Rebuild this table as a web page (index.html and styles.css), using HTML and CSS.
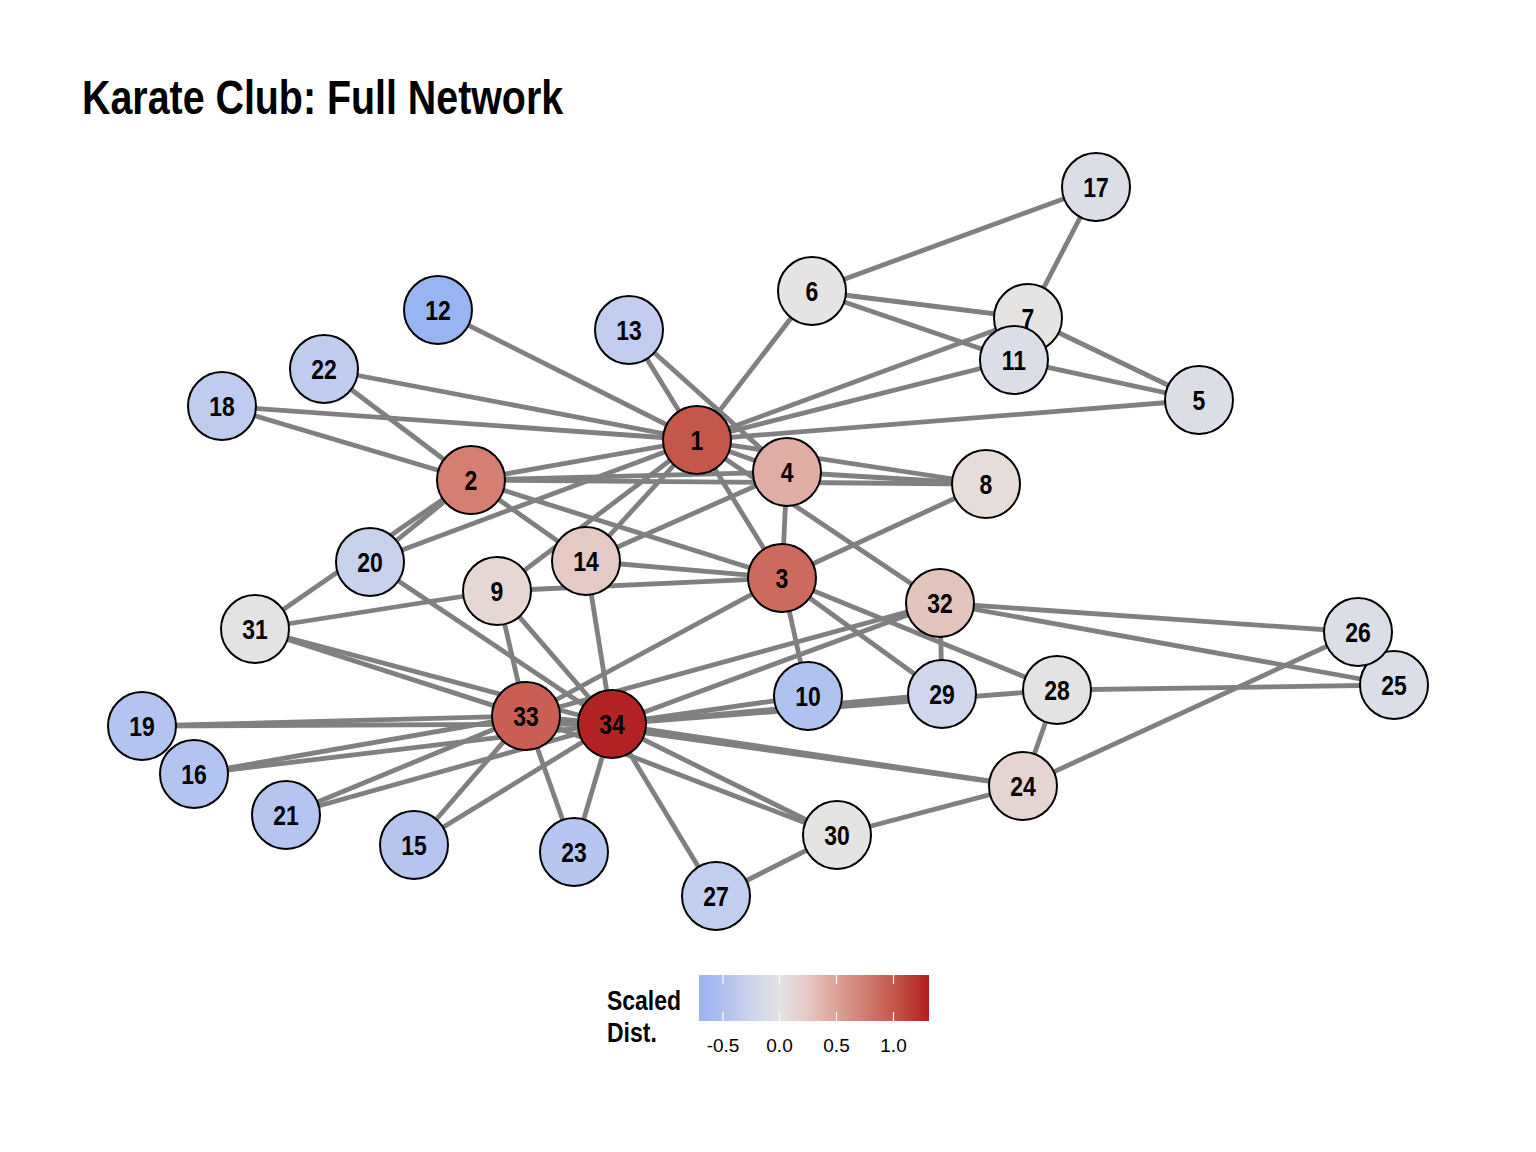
FILE: index.html
```html
<!DOCTYPE html>
<html lang="en">
<head>
<meta charset="utf-8">
<title>Karate Club: Full Network</title>
<link rel="stylesheet" href="styles.css">
</head>
<body>
<div class="page">
  <h1 class="title">Karate Club: Full Network</h1>
  <svg class="network" width="1536" height="800" viewBox="0 140 1536 800" xmlns="http://www.w3.org/2000/svg">
    <g class="edges">
      <line x1="697" y1="440" x2="471" y2="480"/>
      <line x1="697" y1="440" x2="782" y2="578"/>
      <line x1="697" y1="440" x2="787" y2="472"/>
      <line x1="697" y1="440" x2="1199" y2="400"/>
      <line x1="697" y1="440" x2="812" y2="291"/>
      <line x1="697" y1="440" x2="1028" y2="318"/>
      <line x1="697" y1="440" x2="986" y2="484"/>
      <line x1="697" y1="440" x2="497" y2="591"/>
      <line x1="697" y1="440" x2="1014" y2="360"/>
      <line x1="697" y1="440" x2="438" y2="310"/>
      <line x1="697" y1="440" x2="629" y2="330"/>
      <line x1="697" y1="440" x2="586" y2="561"/>
      <line x1="697" y1="440" x2="222" y2="406"/>
      <line x1="697" y1="440" x2="370" y2="562"/>
      <line x1="697" y1="440" x2="324" y2="369"/>
      <line x1="697" y1="440" x2="940" y2="603"/>
      <line x1="471" y1="480" x2="782" y2="578"/>
      <line x1="471" y1="480" x2="787" y2="472"/>
      <line x1="471" y1="480" x2="986" y2="484"/>
      <line x1="471" y1="480" x2="586" y2="561"/>
      <line x1="471" y1="480" x2="222" y2="406"/>
      <line x1="471" y1="480" x2="370" y2="562"/>
      <line x1="471" y1="480" x2="324" y2="369"/>
      <line x1="471" y1="480" x2="255" y2="629"/>
      <line x1="782" y1="578" x2="787" y2="472"/>
      <line x1="782" y1="578" x2="986" y2="484"/>
      <line x1="782" y1="578" x2="497" y2="591"/>
      <line x1="782" y1="578" x2="808" y2="696"/>
      <line x1="782" y1="578" x2="586" y2="561"/>
      <line x1="782" y1="578" x2="1057" y2="690"/>
      <line x1="782" y1="578" x2="942" y2="694"/>
      <line x1="782" y1="578" x2="526" y2="716"/>
      <line x1="787" y1="472" x2="986" y2="484"/>
      <line x1="787" y1="472" x2="629" y2="330"/>
      <line x1="787" y1="472" x2="586" y2="561"/>
      <line x1="1199" y1="400" x2="1028" y2="318"/>
      <line x1="1199" y1="400" x2="1014" y2="360"/>
      <line x1="812" y1="291" x2="1028" y2="318"/>
      <line x1="812" y1="291" x2="1014" y2="360"/>
      <line x1="812" y1="291" x2="1096" y2="187"/>
      <line x1="1028" y1="318" x2="1096" y2="187"/>
      <line x1="497" y1="591" x2="255" y2="629"/>
      <line x1="497" y1="591" x2="526" y2="716"/>
      <line x1="497" y1="591" x2="612" y2="724"/>
      <line x1="808" y1="696" x2="612" y2="724"/>
      <line x1="586" y1="561" x2="612" y2="724"/>
      <line x1="414" y1="845" x2="526" y2="716"/>
      <line x1="414" y1="845" x2="612" y2="724"/>
      <line x1="194" y1="774" x2="526" y2="716"/>
      <line x1="194" y1="774" x2="612" y2="724"/>
      <line x1="142" y1="726" x2="526" y2="716"/>
      <line x1="142" y1="726" x2="612" y2="724"/>
      <line x1="370" y1="562" x2="612" y2="724"/>
      <line x1="286" y1="815" x2="526" y2="716"/>
      <line x1="286" y1="815" x2="612" y2="724"/>
      <line x1="574" y1="852" x2="526" y2="716"/>
      <line x1="574" y1="852" x2="612" y2="724"/>
      <line x1="1023" y1="786" x2="1358" y2="632"/>
      <line x1="1023" y1="786" x2="1057" y2="690"/>
      <line x1="1023" y1="786" x2="837" y2="835"/>
      <line x1="1023" y1="786" x2="526" y2="716"/>
      <line x1="1023" y1="786" x2="612" y2="724"/>
      <line x1="1394" y1="685" x2="1358" y2="632"/>
      <line x1="1394" y1="685" x2="1057" y2="690"/>
      <line x1="1394" y1="685" x2="940" y2="603"/>
      <line x1="1358" y1="632" x2="940" y2="603"/>
      <line x1="716" y1="896" x2="837" y2="835"/>
      <line x1="716" y1="896" x2="612" y2="724"/>
      <line x1="1057" y1="690" x2="612" y2="724"/>
      <line x1="942" y1="694" x2="940" y2="603"/>
      <line x1="942" y1="694" x2="612" y2="724"/>
      <line x1="837" y1="835" x2="526" y2="716"/>
      <line x1="837" y1="835" x2="612" y2="724"/>
      <line x1="255" y1="629" x2="526" y2="716"/>
      <line x1="255" y1="629" x2="612" y2="724"/>
      <line x1="940" y1="603" x2="526" y2="716"/>
      <line x1="940" y1="603" x2="612" y2="724"/>
      <line x1="526" y1="716" x2="612" y2="724"/>
    </g>
    <g class="nodes">
      <circle cx="697" cy="440" r="34" fill="#c5564a"/><text x="697" y="450">1</text>
      <circle cx="471" cy="480" r="34" fill="#d57f71"/><text x="471" y="490">2</text>
      <circle cx="782" cy="578" r="34" fill="#cd6a5e"/><text x="782" y="588">3</text>
      <circle cx="787" cy="472" r="34" fill="#e0ada5"/><text x="787" y="482">4</text>
      <circle cx="1199" cy="400" r="34" fill="#dcdee6"/><text x="1199" y="410">5</text>
      <circle cx="812" cy="291" r="34" fill="#e5e4e3"/><text x="812" y="301">6</text>
      <circle cx="1028" cy="318" r="34" fill="#e5e4e3"/><text x="1028" y="328">7</text>
      <circle cx="986" cy="484" r="34" fill="#e6dcd9"/><text x="986" y="494">8</text>
      <circle cx="497" cy="591" r="34" fill="#e6d7d4"/><text x="497" y="601">9</text>
      <circle cx="808" cy="696" r="34" fill="#b0c2f0"/><text x="808" y="706">10</text>
      <circle cx="1014" cy="360" r="34" fill="#dcdee7"/><text x="1014" y="370">11</text>
      <circle cx="438" cy="310" r="34" fill="#98b5f3"/><text x="438" y="320">12</text>
      <circle cx="629" cy="330" r="34" fill="#c2cdef"/><text x="629" y="340">13</text>
      <circle cx="586" cy="561" r="34" fill="#e4c9c4"/><text x="586" y="571">14</text>
      <circle cx="414" cy="845" r="34" fill="#b5c5f0"/><text x="414" y="855">15</text>
      <circle cx="194" cy="774" r="34" fill="#b3c4f0"/><text x="194" y="784">16</text>
      <circle cx="1096" cy="187" r="34" fill="#dcdee6"/><text x="1096" y="197">17</text>
      <circle cx="222" cy="406" r="34" fill="#c0ccef"/><text x="222" y="416">18</text>
      <circle cx="142" cy="726" r="34" fill="#b4c4f0"/><text x="142" y="736">19</text>
      <circle cx="370" cy="562" r="34" fill="#c9d2ec"/><text x="370" y="572">20</text>
      <circle cx="286" cy="815" r="34" fill="#b5c5f0"/><text x="286" y="825">21</text>
      <circle cx="324" cy="369" r="34" fill="#c0ccef"/><text x="324" y="379">22</text>
      <circle cx="574" cy="852" r="34" fill="#b7c6f0"/><text x="574" y="862">23</text>
      <circle cx="1023" cy="786" r="34" fill="#e5d4d1"/><text x="1023" y="796">24</text>
      <circle cx="1394" cy="685" r="34" fill="#dcdee7"/><text x="1394" y="695">25</text>
      <circle cx="1358" cy="632" r="34" fill="#dcdee7"/><text x="1358" y="642">26</text>
      <circle cx="716" cy="896" r="34" fill="#c2ceef"/><text x="716" y="906">27</text>
      <circle cx="1057" cy="690" r="34" fill="#e3e3e3"/><text x="1057" y="700">28</text>
      <circle cx="942" cy="694" r="34" fill="#d0d6ec"/><text x="942" y="704">29</text>
      <circle cx="837" cy="835" r="34" fill="#e4e4e3"/><text x="837" y="845">30</text>
      <circle cx="255" cy="629" r="34" fill="#e3e3e3"/><text x="255" y="639">31</text>
      <circle cx="940" cy="603" r="34" fill="#e3c4bd"/><text x="940" y="613">32</text>
      <circle cx="526" cy="716" r="34" fill="#cb5e52"/><text x="526" y="726">33</text>
      <circle cx="612" cy="724" r="34" fill="#b42323"/><text x="612" y="734">34</text>
    </g>
  </svg>
  <div class="legend">
    <div class="legend-title"><span class="narrow">Scaled</span><br><span class="narrow">Dist.</span></div>
    <svg class="colorbar" width="240" height="85" viewBox="0 0 240 85" xmlns="http://www.w3.org/2000/svg">
      <defs>
        <linearGradient id="grad" x1="0" y1="0" x2="1" y2="0">
          <stop offset="0" stop-color="#9ab3f4"/>
          <stop offset="0.12" stop-color="#b3c2ef"/>
          <stop offset="0.24" stop-color="#cfd5ea"/>
          <stop offset="0.35" stop-color="#e3e3e3"/>
          <stop offset="0.47" stop-color="#e5c9c4"/>
          <stop offset="0.60" stop-color="#dca197"/>
          <stop offset="0.72" stop-color="#d07e72"/>
          <stop offset="0.85" stop-color="#c4574b"/>
          <stop offset="1" stop-color="#b11f1f"/>
        </linearGradient>
      </defs>
      <rect x="0" y="0" width="230" height="46" fill="url(#grad)"/>
      <g class="ticks">
        <line x1="24" y1="0" x2="24" y2="9"/><line x1="24" y1="37" x2="24" y2="46"/>
        <line x1="80.5" y1="0" x2="80.5" y2="9"/><line x1="80.5" y1="37" x2="80.5" y2="46"/>
        <line x1="137.5" y1="0" x2="137.5" y2="9"/><line x1="137.5" y1="37" x2="137.5" y2="46"/>
        <line x1="194.5" y1="0" x2="194.5" y2="9"/><line x1="194.5" y1="37" x2="194.5" y2="46"/>
      </g>
      <text x="24" y="77">-0.5</text>
      <text x="80.5" y="77">0.0</text>
      <text x="137.5" y="77">0.5</text>
      <text x="194.5" y="77">1.0</text>
    </svg>
  </div>
</div>
</body>
</html>
```

FILE: styles.css
```css
html, body {
  margin: 0;
  background: #ffffff;
}

.page {
  width: 1536px;
  height: 1152px;
  overflow: hidden;
}

.title {
  margin: 0;
  padding: 70px 0 0 82px;
  font-family: "Liberation Sans", Arial, sans-serif;
  font-weight: bold;
  font-size: 48px;
  line-height: 56px;
  color: #000000;
  white-space: nowrap;
  transform: scaleX(0.82);
  transform-origin: 82px 0;
}

.network {
  display: block;
  margin-top: 14px;
}

.edges line {
  stroke: #808080;
  stroke-width: 4.8;
}

.nodes circle {
  stroke: #000000;
  stroke-width: 2;
}

.nodes text {
  font-family: "Liberation Sans", Arial, sans-serif;
  font-weight: bold;
  font-size: 28px;
  text-anchor: middle;
  fill: #000000;
  transform-box: fill-box;
  transform-origin: center;
  transform: scaleX(0.82);
}

.legend {
  display: flex;
  margin: 35px 0 0 607px;
}

.legend-title {
  width: 92px;
  padding-top: 10px;
  font-family: "Liberation Sans", Arial, sans-serif;
  font-weight: bold;
  font-size: 28px;
  line-height: 32px;
  color: #000000;
}

.narrow {
  display: inline-block;
  transform: scaleX(0.82);
  transform-origin: 0 0;
}

.colorbar {
  display: block;
  overflow: visible;
}

.ticks line {
  stroke: #ffffff;
  stroke-width: 1.2;
}

.colorbar text {
  font-family: "Liberation Sans", Arial, sans-serif;
  font-size: 19px;
  text-anchor: middle;
  fill: #000000;
}
```
